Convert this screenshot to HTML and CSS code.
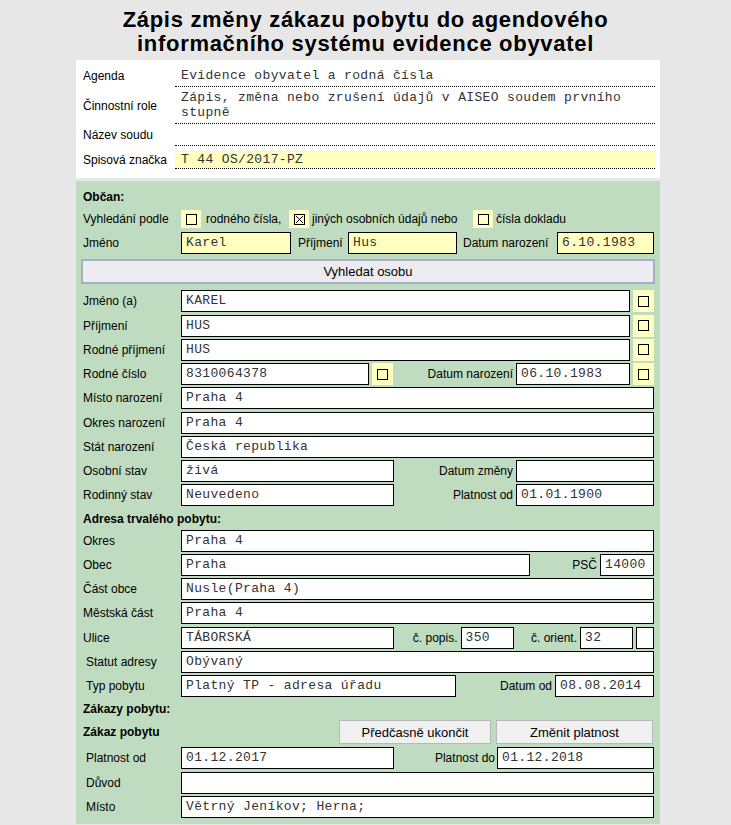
FILE: index.html
```html
<!DOCTYPE html>
<html lang="cs">
<head>
    <meta charset="UTF-8">
    <meta name="viewport" content="width=device-width, initial-scale=1.0">
    <title>Zápis změny zákazu pobytu</title>
    <link rel="stylesheet" href="styles.css">
</head>
<body>
    <h1 class="page-title">Zápis změny zákazu pobytu do agendového<br>informačního systému evidence obyvatel</h1>

    <div class="head-panel">
        <div class="head-row row-agenda">
            <div class="head-label">Agenda</div>
            <div class="head-value">Evidence obyvatel a rodná čísla</div>
        </div>
        <div class="head-row row-role">
            <div class="head-label">Činnostní role</div>
            <div class="head-value">Zápis, změna nebo zrušení údajů v AISEO soudem prvního<br>stupně</div>
        </div>
        <div class="head-row row-court">
            <div class="head-label">Název soudu</div>
            <div class="head-value"></div>
        </div>
        <div class="head-row row-file">
            <div class="head-label">Spisová značka</div>
            <div class="head-value yellow">T 44 OS/2017-PZ</div>
        </div>
    </div>

    <div class="form-panel">
        <div class="section-title">Občan:</div>
        <div class="row">
            <div class="lbl">Vyhledání podle</div>
            <span class="cb-cell search-cb"><span class="cb"></span></span>
            <span class="opt opt-rc">rodného čísla,</span>
            <span class="cb-cell search-cb">
                <svg width="11" height="11" viewBox="0 0 11 11"><rect x="0.5" y="0.5" width="10" height="10" fill="none" stroke="#000"/><path d="M2 2L9 9M9 2L2 9" stroke="#000" stroke-width="1"/></svg>
            </span>
            <span class="opt opt-other">jiných osobních údajů nebo</span>
            <span class="cb-cell search-cb"><span class="cb"></span></span>
            <span class="opt">čísla dokladu</span>
        </div>
        <div class="row">
            <div class="lbl">Jméno</div>
            <div class="fld yellow w-sname">Karel</div>
            <div class="mid-lbl w-surname-lbl">Příjmení</div>
            <div class="fld yellow w-ssurname">Hus</div>
            <div class="mid-lbl w-date-lbl">Datum narození</div>
            <div class="fld yellow grow">6.10.1983</div>
        </div>
        <button class="search-btn">Vyhledat osobu</button>

        <div class="row">
            <div class="lbl">Jméno (a)</div>
            <div class="fld grow">KAREL</div>
            <span class="cb-cell"><span class="cb"></span></span>
        </div>
        <div class="row">
            <div class="lbl">Příjmení</div>
            <div class="fld grow">HUS</div>
            <span class="cb-cell"><span class="cb"></span></span>
        </div>
        <div class="row">
            <div class="lbl">Rodné příjmení</div>
            <div class="fld grow">HUS</div>
            <span class="cb-cell"><span class="cb"></span></span>
        </div>
        <div class="row">
            <div class="lbl">Rodné číslo</div>
            <div class="fld w-rc">8310064378</div>
            <span class="cb-cell"><span class="cb"></span></span>
            <div class="rlbl">Datum narození</div>
            <div class="fld w-birth">06.10.1983</div>
            <span class="cb-cell"><span class="cb"></span></span>
        </div>
        <div class="row">
            <div class="lbl">Místo narození</div>
            <div class="fld grow">Praha 4</div>
        </div>
        <div class="row">
            <div class="lbl">Okres narození</div>
            <div class="fld grow">Praha 4</div>
        </div>
        <div class="row">
            <div class="lbl">Stát narození</div>
            <div class="fld grow">Česká republika</div>
        </div>
        <div class="row">
            <div class="lbl">Osobní stav</div>
            <div class="fld w-half">živá</div>
            <div class="rlbl">Datum změny</div>
            <div class="fld w-date"></div>
        </div>
        <div class="row">
            <div class="lbl">Rodinný stav</div>
            <div class="fld w-half">Neuvedeno</div>
            <div class="rlbl">Platnost od</div>
            <div class="fld w-date">01.01.1900</div>
        </div>

        <div class="section-title">Adresa trvalého pobytu:</div>
        <div class="row">
            <div class="lbl">Okres</div>
            <div class="fld grow">Praha 4</div>
        </div>
        <div class="row">
            <div class="lbl">Obec</div>
            <div class="fld w-town">Praha</div>
            <div class="rlbl">PSČ</div>
            <div class="fld w-zip">14000</div>
        </div>
        <div class="row">
            <div class="lbl">Část obce</div>
            <div class="fld grow">Nusle(Praha 4)</div>
        </div>
        <div class="row">
            <div class="lbl">Městská část</div>
            <div class="fld grow">Praha 4</div>
        </div>
        <div class="row">
            <div class="lbl">Ulice</div>
            <div class="fld w-half">TÁBORSKÁ</div>
            <div class="rlbl">č. popis.</div>
            <div class="fld w-num">350</div>
            <div class="rlbl">č. orient.</div>
            <div class="fld w-num">32</div>
            <div class="fld w-letter"></div>
        </div>
        <div class="row">
            <div class="lbl indent">Statut adresy</div>
            <div class="fld grow">Obývaný</div>
        </div>
        <div class="row">
            <div class="lbl indent">Typ pobytu</div>
            <div class="fld w-type">Platný TP - adresa úřadu</div>
            <div class="rlbl">Datum od</div>
            <div class="fld w-from">08.08.2014</div>
        </div>

        <div class="section-title">Zákazy pobytu:</div>
        <div class="row action-row">
            <div class="lbl strong">Zákaz pobytu</div>
            <button class="act-btn w-end">Předčasně ukončit</button>
            <button class="act-btn w-change">Změnit platnost</button>
        </div>
        <div class="row">
            <div class="lbl indent">Platnost od</div>
            <div class="fld w-half">01.12.2017</div>
            <div class="rlbl tight">Platnost do</div>
            <div class="fld w-until">01.12.2018</div>
        </div>
        <div class="row">
            <div class="lbl indent">Důvod</div>
            <div class="fld grow"></div>
        </div>
        <div class="row">
            <div class="lbl indent">Místo</div>
            <div class="fld grow">Větrný Jeníkov; Herna;</div>
        </div>
    </div>
</body>
</html>
```

FILE: styles.css
```css
body {
    margin: 0;
    background-color: #e7e7e7;
    font-family: "Liberation Sans", Arial, sans-serif;
    font-size: 12px;
    color: #000;
}

.page-title {
    margin: 0;
    height: 60px;
    box-sizing: border-box;
    padding-top: 8px;
    font-size: 22px;
    letter-spacing: 0.7px;
    line-height: 24px;
    text-align: center;
}

/* header block */
.head-panel {
    margin-left: 76px;
    width: 584px;
    box-sizing: border-box;
    padding: 5px 5px 9px 7px;
    background-color: #fff;
}
.head-row {
    display: flex;
}
.head-label {
    width: 92px;
    flex: none;
    display: flex;
    align-items: center;
}
.head-value {
    flex: 1;
    display: flex;
    align-items: center;
    padding-left: 6px;
    border-bottom: 1px dotted #000;
    font-family: "Liberation Mono", "Courier New", monospace;
    font-size: 13px;
    letter-spacing: 0.35px;
    line-height: 15px;
    color: #333;
}
.row-agenda { height: 22px; }
.row-role { height: 37px; }
.row-court { height: 22px; }
.row-file { height: 18px; margin-top: 5px; }

.yellow {
    background-color: #ffffc0;
}

/* form block */
.form-panel {
    margin: 3px 0 0 76px;
    width: 584px;
    box-sizing: border-box;
    padding: 6px 6px 4px 7px;
    background-color: #c0dcc0;
}
.section-title {
    height: 21px;
    line-height: 21px;
    font-weight: bold;
}
.row {
    display: flex;
    align-items: center;
    height: 22px;
    margin-bottom: 2.25px;
}
.lbl {
    width: 98px;
    flex: none;
    white-space: nowrap;
}
.lbl.indent {
    width: 95px;
    padding-left: 3px;
}
.lbl.strong {
    flex: 1;
    font-weight: bold;
}
.rlbl {
    flex: 1;
    text-align: right;
    padding-right: 3px;
    white-space: nowrap;
}
.rlbl.tight {
    padding-right: 2px;
}
.mid-lbl {
    flex: none;
    white-space: nowrap;
}

.fld {
    flex: none;
    height: 22px;
    box-sizing: border-box;
    padding: 0 4px;
    border: 1px solid #000;
    background-color: #fff;
    font-family: "Liberation Mono", "Courier New", monospace;
    font-size: 13px;
    letter-spacing: 0.35px;
    line-height: 20px;
    color: #333;
    white-space: nowrap;
    overflow: hidden;
}
.fld.yellow { background-color: #ffffc0; }
.fld.grow { flex: 1; }

.w-sname { width: 110px; }
.w-ssurname { width: 109px; }
.w-surname-lbl { width: 50px; padding-left: 7px; }
.w-date-lbl { width: 94px; padding-left: 6px; }
.w-rc { width: 188px; }
.w-birth { width: 114px; }
.w-half { width: 213px; }
.w-date { width: 138px; }
.w-town { width: 349px; }
.w-zip { width: 54px; }
.w-num { width: 53px; }
.w-letter { width: 18px; margin-left: 3px; }
.w-type { width: 275px; }
.w-from { width: 99px; }
.w-until { width: 157px; }

/* checkboxes */
.cb-cell {
    flex: none;
    width: 21px;
    height: 22px;
    margin-left: 3px;
    display: flex;
    align-items: center;
    justify-content: center;
    background-color: #ffffc0;
}
.cb-cell.search-cb {
    width: 20px;
    height: 18px;
    margin-left: 0;
}
.cb {
    width: 11px;
    height: 11px;
    box-sizing: border-box;
    border: 1px solid #000;
}
.opt {
    white-space: nowrap;
}
.opt-rc { width: 83px; padding-left: 5px; }
.opt-other { width: 161px; padding-left: 3px; }
.opt:last-child { padding-left: 3px; }

/* buttons */
.search-btn {
    display: block;
    width: 574px;
    height: 25px;
    margin: 5px 0 6px -2px;
    border: 2px solid #a6aec8;
    background-color: #ececf0;
    font-family: "Liberation Sans", Arial, sans-serif;
    font-size: 13px;
    color: #000;
}
.action-row {
    height: 24px;
    margin-bottom: 3px;
}
.act-btn {
    height: 24px;
    border: 1px solid #b8b8b8;
    background-color: #f0f0f0;
    font-family: "Liberation Sans", Arial, sans-serif;
    font-size: 13px;
    color: #000;
}
.w-end { width: 152px; margin-right: 5px; }
.w-change { width: 157px; margin-right: 1px; }
```
